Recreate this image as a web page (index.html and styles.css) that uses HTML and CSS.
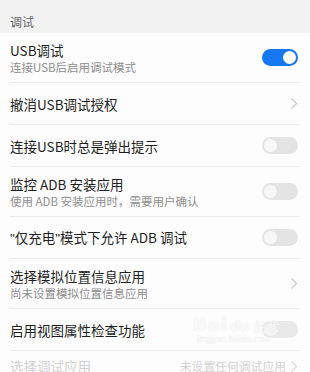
FILE: index.html
```html
<!DOCTYPE html>
<html lang="zh">
<head>
<meta charset="utf-8">
<link rel="stylesheet" href="styles.css">
</head>
<body>
<div class="page">
  <div class="section-header">调试</div>
  <div class="list">
    <div class="row two">
      <div class="text"><div class="title">USB调试</div><div class="sub">连接USB后启用调试模式</div></div>
      <span class="switch on"><span class="knob"></span></span>
    </div>
    <div class="row one">
      <div class="text"><div class="title">撤消USB调试授权</div></div>
      <svg class="chev" width="8" height="13" viewBox="0 0 8 13"><polyline points="1.5,1.5 6.5,6.5 1.5,11.5" fill="none" stroke="#c9c9c9" stroke-width="1.2"/></svg>
    </div>
    <div class="row one">
      <div class="text"><div class="title">连接USB时总是弹出提示</div></div>
      <span class="switch"><span class="knob"></span></span>
    </div>
    <div class="row two">
      <div class="text"><div class="title">监控 ADB 安装应用</div><div class="sub">使用 ADB 安装应用时，需要用户确认</div></div>
      <span class="switch"><span class="knob"></span></span>
    </div>
    <div class="row one">
      <div class="text"><div class="title"><span class="q">"</span>仅充电<span class="q">"</span>模式下允许 ADB 调试</div></div>
      <span class="switch"><span class="knob"></span></span>
    </div>
    <div class="row two">
      <div class="text"><div class="title">选择模拟位置信息应用</div><div class="sub">尚未设置模拟位置信息应用</div></div>
      <svg class="chev" width="8" height="13" viewBox="0 0 8 13"><polyline points="1.5,1.5 6.5,6.5 1.5,11.5" fill="none" stroke="#c9c9c9" stroke-width="1.2"/></svg>
    </div>
    <div class="row one">
      <div class="text"><div class="title">启用视图属性检查功能</div></div>
      <span class="switch faded"><span class="knob"></span></span>
    </div>
    <div class="row last disabled">
      <div class="text"><div class="title">选择调试应用</div></div>
      <div class="value">未设置任何调试应用<svg class="chev" width="8" height="13" viewBox="0 0 8 13"><polyline points="1.5,1.5 6.5,6.5 1.5,11.5" fill="none" stroke="#d8d8d8" stroke-width="1.2"/></svg></div>
    </div>
  </div>
  <div class="watermark">
    <div class="wm-top"><span class="wm-bai">Bai</span><span class="wm-du">du</span><span class="wm-jy">经验</span></div>
    <div class="wm-url">jingyan.baidu.com</div>
  </div>
</div>
</body>
</html>
```
FILE: styles.css
```css
html, body {
  margin: 0;
  padding: 0;
  background: #fdfdfd;
}
body {
  font-family: "Noto Sans CJK SC", "Noto Sans", sans-serif;
  overflow: hidden;
  height: 372px;
}
.page {
  position: relative;
  width: 310px;
  height: 372px;
  overflow: hidden;
}
.section-header {
  background: #f2f2f2;
  height: 33px;
  box-sizing: border-box;
  padding: 14px 10px 0;
  font-size: 12px;
  line-height: 16px;
  color: #666;
}
.list {
  background: #fdfdfd;
}
.row {
  margin: 0 10px;
  border-bottom: 1px solid #ececec;
  display: flex;
  align-items: center;
  justify-content: space-between;
  box-sizing: border-box;
}
.row.two { height: 50px; }
.row.one { height: 42px; }
.title {
  font-size: 13.5px;
  line-height: 18px;
  color: #1e1e1e;
}
.q {
  font-family: "Liberation Sans", sans-serif;
}
.sub {
  font-size: 11.5px;
  line-height: 16px;
  color: #8e8e8e;
}
.switch {
  width: 36px;
  height: 17px;
  border-radius: 9px;
  background: #e4e4e4;
  margin-right: 2px;
  display: flex;
  align-items: center;
  padding: 0 2px;
  box-sizing: border-box;
  flex-shrink: 0;
}
.switch .knob {
  width: 13px;
  height: 13px;
  border-radius: 50%;
  background: #f7f7f7;
}
.switch.on {
  background: #1677f2;
  justify-content: flex-end;
}
.switch.on .knob { background: #fff; }
.switch.faded { background: #e9e9e9; }
.chev {
  margin-right: 2px;
  flex-shrink: 0;
}
.row.last {
  border-bottom: none;
  height: 24px;
  align-items: flex-end;
}
.disabled .title { color: #d2d2d2; }
.value {
  display: flex;
  align-items: center;
  gap: 4px;
  font-size: 11.8px;
  line-height: 18px;
  color: #d2d2d2;
}
.watermark {
  position: absolute;
  left: 193px;
  top: 314px;
  width: 100px;
  color: rgba(255,255,255,0.85);
  text-shadow: 0 0 1px rgba(190,190,190,0.5);
}
.wm-top {
  display: flex;
  align-items: baseline;
  font-family: "DejaVu Sans", sans-serif;
}
.wm-bai { font-size: 18px; font-weight: bold; letter-spacing: 1px; }
.wm-du { font-size: 14px; font-weight: bold; margin-left: 2px; }
.wm-jy { font-size: 13px; margin-left: 4px; font-family: "Noto Sans CJK SC", sans-serif; }
.wm-url {
  font-size: 8px;
  line-height: 10px;
  font-family: "DejaVu Sans", sans-serif;
  margin-left: 4px;
}
```
